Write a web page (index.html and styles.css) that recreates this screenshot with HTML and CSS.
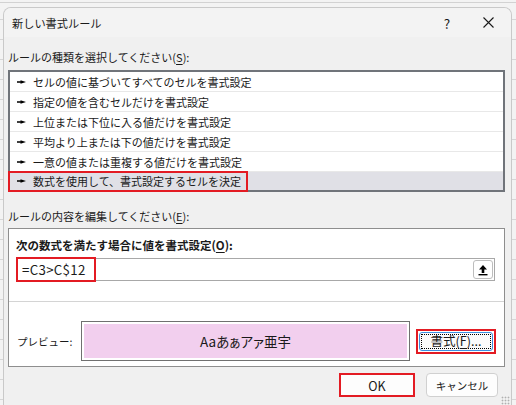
FILE: index.html
```html
<!DOCTYPE html>
<html lang="ja">
<head>
<meta charset="utf-8">
<link rel="stylesheet" href="styles.css">
</head>
<body>
<div class="page">
  <div class="dialog">
    <div class="titlebar">
      <span class="title">新しい書式ルール</span>
      <span class="help">?</span>
      <span class="close"><svg width="11" height="11" viewBox="0 0 11 11"><path d="M0.5 0.5L10.5 10.5M10.5 0.5L0.5 10.5" stroke="#1a1a1a" stroke-width="1.1" fill="none"/></svg></span>
    </div>
    <div class="body">
      <div class="label">ルールの種類を選択してください(<u>S</u>):</div>
      <ul class="list">
        <li class="item"><svg class="arrow" width="9" height="6" viewBox="0 0 9 6"><path d="M0 2.2H3.5V1.2L9 3L3.5 4.8V3.8H0Z" fill="#000"/></svg>セルの値に基づいてすべてのセルを書式設定</li>
        <li class="item"><svg class="arrow" width="9" height="6" viewBox="0 0 9 6"><path d="M0 2.2H3.5V1.2L9 3L3.5 4.8V3.8H0Z" fill="#000"/></svg>指定の値を含むセルだけを書式設定</li>
        <li class="item"><svg class="arrow" width="9" height="6" viewBox="0 0 9 6"><path d="M0 2.2H3.5V1.2L9 3L3.5 4.8V3.8H0Z" fill="#000"/></svg>上位または下位に入る値だけを書式設定</li>
        <li class="item"><svg class="arrow" width="9" height="6" viewBox="0 0 9 6"><path d="M0 2.2H3.5V1.2L9 3L3.5 4.8V3.8H0Z" fill="#000"/></svg>平均より上または下の値だけを書式設定</li>
        <li class="item"><svg class="arrow" width="9" height="6" viewBox="0 0 9 6"><path d="M0 2.2H3.5V1.2L9 3L3.5 4.8V3.8H0Z" fill="#000"/></svg>一意の値または重複する値だけを書式設定</li>
        <li class="item selected"><svg class="arrow" width="9" height="6" viewBox="0 0 9 6"><path d="M0 2.2H3.5V1.2L9 3L3.5 4.8V3.8H0Z" fill="#000"/></svg>数式を使用して、書式設定するセルを決定<span class="mark mark-item"></span></li>
      </ul>
      <div class="label label2">ルールの内容を編集してください(<u>E</u>):</div>
      <div class="panel">
        <div class="panel-top">
          <div class="bold-label">次の数式を満たす場合に値を書式設定(<u>O</u>):</div>
          <div class="input">
            <span class="formula">=C3&gt;C$12</span>
            <span class="collapse"><svg width="10" height="12" viewBox="0 0 10 12"><path d="M5 1L9 5.5H6.3V9H3.7V5.5H1Z" fill="#000"/><rect x="0.5" y="10" width="9" height="1.4" fill="#000"/></svg></span>
            <span class="mark mark-formula"></span>
          </div>
        </div>
        <div class="preview-row">
          <div class="preview-label">プレビュー:</div>
          <div class="preview-box"><div class="preview-fill">Aaあぁアァ亜宇</div></div>
          <div class="format-wrap"><button class="format-btn"><span class="focus">書式(<u>F</u>)...</span></button></div>
        </div>
      </div>
      <div class="buttons">
        <button class="btn ok">OK</button>
        <button class="btn cancel">キャンセル</button>
      </div>
    </div>
    <div class="grip"></div>
  </div>
</div>
</body>
</html>
```

FILE: styles.css
```css
* { box-sizing: border-box; }
html, body { margin: 0; padding: 0; }
body {
  width: 516px;
  height: 405px;
  overflow: hidden;
  font-family: "Noto Sans CJK JP", "Noto Sans", sans-serif;
  color: #1a1a1a;
  background-color: #f3f3f3;
  background-image: repeating-linear-gradient(to bottom, transparent 0, transparent 19px, #d6d6d6 19px, #d6d6d6 20px);
}
.page {
  width: 516px;
  height: 403px;
  border-top: 1px solid #d2d2d2;
  margin-top: 2px;
  padding-top: 4px;
  padding-left: 3px;
  overflow: hidden;
}
.dialog {
  position: relative;
  width: 509px;
  height: 398px;
  border: 1px solid #c9c9c9;
  border-bottom: none;
  border-radius: 8px 8px 0 0;
  background: #f0f0f0;
  overflow: hidden;
}
.titlebar {
  height: 29px;
  background: #f3f3f3;
  display: flex;
  align-items: center;
  padding-left: 8px;
}
.title { font-size: 11.2px; flex: 1; }
.help { font-size: 13.5px; width: 20px; text-align: center; margin-right: 26px; }
.close { width: 11px; height: 11px; display: flex; margin-right: 17px; }
.body {
  padding: 11px 6px 0 4px;
}
.label { font-size: 11px; line-height: 18px; margin-bottom: 4px; }
.label2 { margin-top: 15px; margin-bottom: 3px; }
u { text-decoration: underline; text-underline-offset: 2px; }
.list {
  list-style: none;
  margin: 0;
  padding: 0;
  height: 122px;
  background: #fff;
  border: 2px solid #70747a;
}
.item {
  position: relative;
  height: 20px;
  border-bottom: 1px solid #e8e8e8;
  display: flex;
  align-items: center;
  font-size: 11px;
  padding-left: 7px;
}
.item:last-child { border-bottom: none; height: 18px; }
.arrow { margin-right: 7px; flex: none; }
.selected { background: #e0e0e6; }
.mark {
  position: absolute;
  border: 2px solid #e31b23;
  pointer-events: none;
}
.mark-item { left: -2px; top: -1px; width: 240px; height: 21px; }
.panel {
  background: #fff;
  border: 1px solid #8e8e8e;
  height: 139px;
}
.panel-top {
  padding: 8px 9px 0 7px;
  height: 73px;
  border-bottom: 1px solid #d4d4d4;
}
.bold-label { font-size: 11.5px; font-weight: bold; line-height: 16px; }
.input {
  position: relative;
  margin-top: 5px;
  height: 23px;
  border: 1px solid #a8a8a8;
  display: flex;
  align-items: center;
  padding-left: 5px;
  padding-right: 1px;
}
.formula { flex: 1; font-size: 13.3px; letter-spacing: 0.3px; }
.collapse {
  width: 20px;
  height: 19px;
  border: 1px solid #bdbdbd;
  border-radius: 3px;
  background: #fff;
  display: flex;
  align-items: center;
  justify-content: center;
}
.mark-formula { left: -1px; top: -2px; width: 80px; height: 25px; }
.preview-row {
  display: flex;
  align-items: center;
  padding: 19px 7px 0 8px;
}
.preview-label { width: 64px; font-size: 10.5px; }
.preview-box {
  width: 329px;
  height: 40px;
  border: 1px solid #707070;
  padding: 2px;
  background: #fff;
}
.preview-fill {
  height: 100%;
  background: #f2cfee;
  display: flex;
  align-items: center;
  justify-content: center;
  font-size: 13.5px;
  font-feature-settings: "palt";
}
.format-wrap {
  margin-left: 6px;
  border: 2px solid #e31b23;
  padding: 1px;
  width: 80px;
  height: 25px;
}
.format-btn {
  width: 100%;
  height: 100%;
  border: 1px solid #3c8fe0;
  border-radius: 3px;
  background: #fbfbfb;
  padding: 1px;
  font-family: inherit;
  font-size: 12.5px;
  color: #1a1a1a;
  display: flex;
}
.focus {
  flex: 1;
  border: 1px dotted #000;
  display: flex;
  align-items: center;
  justify-content: center;
  line-height: 1;
}
.buttons {
  display: flex;
  justify-content: flex-end;
  gap: 11px;
  padding-top: 6px;
  padding-right: 7px;
}
.btn {
  height: 24px;
  font-family: inherit;
  font-size: 12.5px;
  color: #1a1a1a;
  background: #fdfdfd;
  border-radius: 4px;
  padding: 0;
}
.ok {
  width: 76px;
  border: 2px solid #e31b23;
  border-radius: 0;
}
.cancel {
  width: 72px;
  border: 1px solid #d0d0d0;
  font-size: 10.5px;
}
.grip {
  position: absolute;
  right: 1px;
  bottom: 0;
  width: 9px;
  height: 9px;
  background-image: radial-gradient(circle, #b0b0b0 0.8px, transparent 1.1px);
  background-size: 3px 3px;
}
```
